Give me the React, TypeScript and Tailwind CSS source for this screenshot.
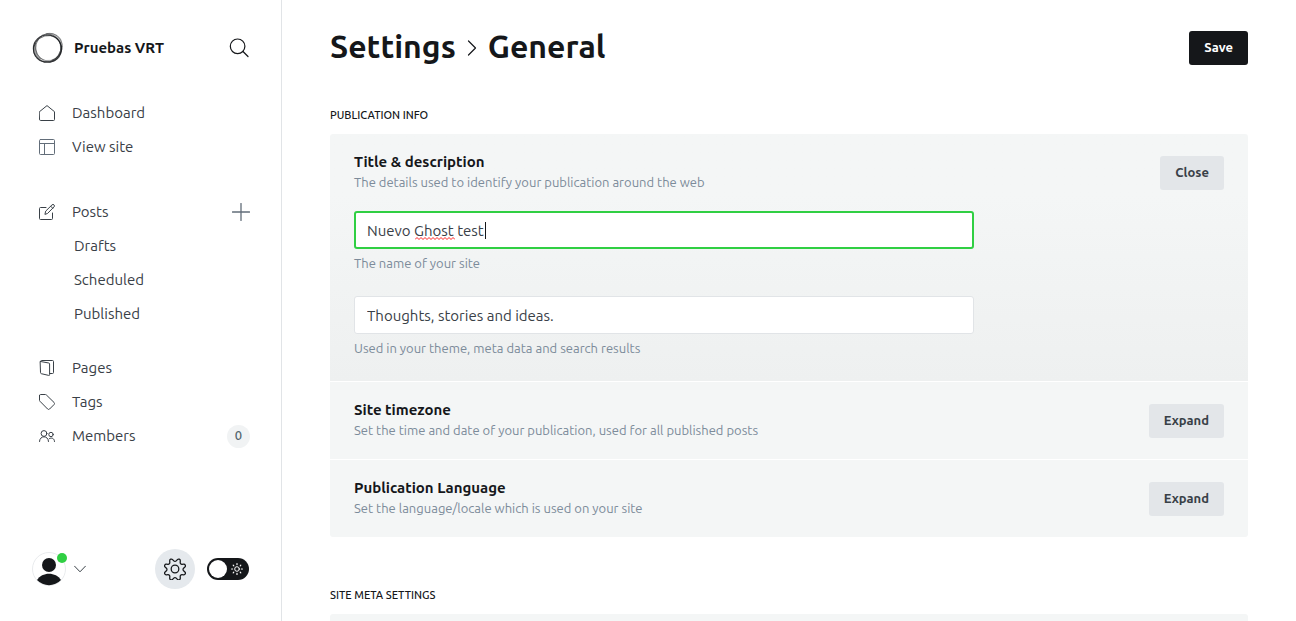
import { useState, type ReactNode } from "react";

type IconProps = { className?: string };

function Logo() {
  return (
    <svg viewBox="0 0 32 32" className="size-8 shrink-0" fill="none" stroke="#15171a" aria-hidden="true">
      <ellipse cx="15.4" cy="16.6" rx="14" ry="13.6" strokeWidth="1.2" strokeOpacity=".8" />
      <ellipse cx="17" cy="15" rx="13" ry="14" strokeWidth=".7" strokeOpacity=".5" transform="rotate(35 17 15)" />
      <ellipse cx="15.2" cy="16.800" rx="14.200" ry="12.800" strokeWidth=".9" strokeOpacity=".6" transform="rotate(-35 15.2 16.8)" />
      <ellipse cx="16.600" cy="16" rx="12.800" ry="14.400" strokeWidth=".7" strokeOpacity=".5" transform="rotate(-25 16.6 16)" />
      <path d="M14 2.600c8-2.400 15.400 3.400 15.200 11.800" strokeWidth="2.600" strokeOpacity=".3" />
      <path d="M29.600 14c0 7-3.600 13-9.500 15" strokeWidth="2" strokeOpacity=".4" />
      <path d="M3 10.500c-1.800 6 .4 13.500 5.600 17" strokeWidth="2" strokeOpacity=".4" />
    </svg>
  );
}

function Line({ className = "size-4", children, box = 16 }: IconProps & { children: ReactNode; box?: number }) {
  return (
    <svg
      viewBox={`0 0 ${box} ${box}`}
      className={`${className} shrink-0`}
      fill="none"
      stroke="currentColor"
      strokeLinecap="round"
      strokeLinejoin="round"
      aria-hidden="true"
    >
      {children}
    </svg>
  );
}

const icons = {
  home: (
    <Line>
      <path d="M.5 6.700 8 .6l7.500 6.100V14.500a1 1 0 0 1-1 1h-13a1 1 0 0 1-1-1z" />
    </Line>
  ),
  site: (
    <Line className="size-4 text-[#626d79]">
      <rect x=".5" y=".5" width="15" height="15" rx="1" />
      <path d="M.5 4.500h15M5.500 4.500v11" />
    </Line>
  ),
  edit: (
    <Line>
      <path d="M13.500 9v5.500a1 1 0 0 1-1 1h-11a1 1 0 0 1-1-1v-10a1 1 0 0 1 1-1H7" />
      <path d="m6 10 .7-2.900L13 .9a1.350 1.350 0 0 1 2 2L8.800 9.200zM11.700 2.200l2 2" />
    </Line>
  ),
  pages: (
    <Line>
      <path d="M1.500 1.500 9.800 3a1 1 0 0 1 .8 1v10.700a.7.7 0 0 1-.9.700l-7.400-1.700a1 1 0 0 1-.8-1z" />
      <path d="M1.500 1.500a1 1 0 0 1 1-1h11a1 1 0 0 1 1 1v11a1 1 0 0 1-1 1h-2.700" />
    </Line>
  ),
  tag: (
    <Line>
      <path d="M.5 1.500v4.700a1.400 1.400 0 0 0 .4 1L8.600 15a1.400 1.400 0 0 0 2 0l4.500-4.500a1.400 1.400 0 0 0 0-2L7.300.9a1.400 1.400 0 0 0-1-.4H1.500a1 1 0 0 0-1 1z" />
    </Line>
  ),
  members: (
    <Line>
      <circle cx="5" cy="5.500" r="2.900" />
      <circle cx="12" cy="6.500" r="2.200" />
      <path d="M.5 13.500c0-6.400 9-6.400 9 0M10.200 10.700c2.300-1.600 5.300-.4 5.300 2.800" />
    </Line>
  ),
};

function Gear() {
  return (
    <Line box={26} className="size-[22px]">
      <g strokeWidth="1.500" transform="translate(1 1)">
        <circle cx="12" cy="12" r="4.500" />
        <path d="m10.546 2.438a1.957 1.957 0 0 0 2.908 0l1.400-1.540a1.959 1.959 0 0 1 3.400 1.407l-.1 2.076a1.959 1.959 0 0 0 2.057 2.056l2.077-.1a1.958 1.958 0 0 1 1.400 3.400l-1.540 1.400a1.961 1.961 0 0 0 0 2.909l1.540 1.400a1.959 1.959 0 0 1-1.400 3.400l-2.077-.1a1.957 1.957 0 0 0-2.057 2.056l.1 2.077a1.959 1.959 0 0 1-3.400 1.400l-1.400-1.540a1.958 1.958 0 0 0-2.908 0l-1.400 1.540a1.959 1.959 0 0 1-3.400-1.400l.1-2.077a1.957 1.957 0 0 0-2.057-2.056l-2.077.1a1.959 1.959 0 0 1-1.400-3.400l1.540-1.400a1.961 1.961 0 0 0 0-2.909l-1.540-1.400a1.958 1.958 0 0 1 1.400-3.400l2.077.1a1.959 1.959 0 0 0 2.057-2.056l-.1-2.076a1.959 1.959 0 0 1 3.400-1.407z" />
      </g>
    </Line>
  );
}

function Sun() {
  return (
    <Line box={12} className="size-3">
      <circle cx="6" cy="6" r="2.300" />
      <path d="M6 .6v1M6 10.400v1M.6 6h1M10.400 6h1M2.200 2.200l.6.6M9.200 9.200l.6.6M2.200 9.800l.6-.6M9.200 2.800l.6-.6" strokeWidth="1.200" />
    </Line>
  );
}

function NavItem({ icon, label, children }: { icon: ReactNode; label: string; children?: ReactNode }) {
  return (
    <li className="flex h-[34px] items-center justify-between pr-[31px] pl-[39px]">
      <a href="#" className="flex items-center gap-[17px]">
        {icon}
        {label}
      </a>
      {children}
    </li>
  );
}

function SubItem({ label }: { label: string }) {
  return (
    <li className="flex h-[34px] items-center pl-[74px]">
      <a href="#">{label}</a>
    </li>
  );
}

function Sidebar() {
  const [dark, setDark] = useState(false);
  return (
    <aside className="flex w-[282px] shrink-0 flex-col border-r border-[#e1e4e7] text-[#394047]">
      <header className="flex h-24 items-center justify-between pr-8 pl-8 text-[#15171a]">
        <div className="flex items-center gap-[10px]">
          <Logo />
          <span className="text-[15px] font-bold">Pruebas VRT</span>
        </div>
        <button type="button" aria-label="Search">
          <Line box={20} className="size-5">
            <g strokeWidth="1.200">
              <circle cx="8.600" cy="8.300" r="7.300" />
              <path d="m14 13.500 5 5" />
            </g>
          </Line>
        </button>
      </header>
      <nav className="flex flex-col text-[15px]">
        <ul>
          <NavItem icon={icons.home} label="Dashboard" />
          <NavItem icon={icons.site} label="View site" />
        </ul>
        <ul className="mt-[31px]">
          <NavItem icon={icons.edit} label="Posts">
            <button type="button" aria-label="New post" className="text-[#626d79]">
              <Line box={18} className="size-[18px]">
                <path d="M9 .5v17M.5 9h17" strokeWidth="1.300" />
              </Line>
            </button>
          </NavItem>
          <SubItem label="Drafts" />
          <SubItem label="Scheduled" />
          <SubItem label="Published" />
        </ul>
        <ul className="mt-5">
          <NavItem icon={icons.pages} label="Pages" />
          <NavItem icon={icons.tag} label="Tags" />
          <NavItem icon={icons.members} label="Members">
            <span className="flex size-[23px] items-center justify-center rounded-full bg-[#f1f3f4] text-[13px] font-medium text-[#54666d]">
              0
            </span>
          </NavItem>
        </ul>
      </nav>
      <footer className="mt-auto flex items-center justify-between pr-8 pb-8 pl-8">
        <button type="button" aria-label="Account" className="relative flex items-center gap-2">
          <svg viewBox="0 0 34 34" className="size-[34px]" aria-hidden="true">
            <circle cx="17" cy="17" r="16.500" fill="#fff" stroke="#e9ebed" />
            <circle cx="17" cy="13" r="7" fill="#15171a" />
            <path d="M5 28c5-8.500 19-8.500 24 0a16.500 16.500 0 0 1-24 0z" fill="#15171a" />
          </svg>
          <span className="absolute top-px left-[25px] size-[10px] rounded-full bg-[#30cf43]" />
          <Line box={12} className="size-3">
            <path d="m.6 3.200 5.400 5.600 5.400-5.600" />
          </Line>
        </button>
        <div className="flex items-center gap-3">
          <a
            href="#"
            aria-label="Settings"
            className="flex size-10 items-center justify-center rounded-full bg-[#e5e9ed] text-[#15171a]"
          >
            <Gear />
          </a>
          <button
            type="button"
            role="switch"
            aria-checked={dark}
            aria-label="Dark mode"
            onClick={() => setDark(!dark)}
            className="flex h-[22px] w-[42px] items-center justify-between rounded-full bg-[#15171a] pr-[6px] pl-[2px] text-white"
          >
            <span className="size-[18px] rounded-full bg-white" />
            <Sun />
          </button>
        </div>
      </footer>
    </aside>
  );
}

function SettingRow({
  title,
  text,
  action,
  open = false,
  children,
}: {
  title: string;
  text: string;
  action: string;
  open?: boolean;
  children?: ReactNode;
}) {
  return (
    <section
      className={
        open ? "bg-linear-to-b from-[#f4f6f6] from-25% to-[#eef0f0] px-6 pt-[18px] pb-[22px]" : "bg-[#f4f6f6] px-6 py-[18px]"
      }
    >
      <div className="flex items-start justify-between">
        <div>
          <h3 className="text-[15px] leading-5 font-bold text-[#15171a]">{title}</h3>
          <p className="text-[13px] leading-[21px] text-[#7c8b9a]">{text}</p>
        </div>
        <button type="button" className="mt-1 h-[34px] rounded-[3px] bg-[#e3e6e9] px-[15px] text-[13px] font-semibold text-[#394047]">
          {action}
        </button>
      </div>
      {children}
    </section>
  );
}

const field = "block h-[38px] w-full rounded-[3px] bg-white text-[15px] text-[#394047] outline-none";

export default function App() {
  const [title, setTitle] = useState("Nuevo Ghost test");
  const [description, setDescription] = useState("Thoughts, stories and ideas.");

  return (
    <div className="flex h-screen bg-white font-['Ubuntu','Noto_Sans',sans-serif]">
      <Sidebar />
      <main className="min-w-0 flex-1 overflow-y-auto px-12 [scrollbar-width:none]">
        <header className="flex h-24 items-center justify-between">
          <h1 className="flex items-center pb-1 text-[32px] leading-10 font-bold text-[#15171a]">
            <a href="#">Settings</a>
            <Line box={16} className="mx-2 mt-1 size-4">
              <path d="m4.500 1 7 7-7 7" strokeWidth="1.200" />
            </Line>
            General
          </h1>
          <button type="button" className="h-[34px] rounded-[3px] bg-[#15171a] px-[15px] text-[13px] font-semibold text-white">
            Save
          </button>
        </header>

        <h2 className="mt-[10px] mb-[10px] text-[11px] leading-[18px] font-medium text-[#15171a]">PUBLICATION INFO</h2>
        <div className="flex flex-col gap-px overflow-hidden rounded-[3px]">
          <SettingRow open title="Title & description" text="The details used to identify your publication around the web" action="Close">
            <div className="mt-[18px] flex max-w-[620px] flex-col gap-[22px]">
              <div>
                <div className="relative">
                  <input
                    id="site-title"
                    className={`${field} border-2 border-[#30cf43] px-[11px] caret-transparent`}
                    value={title}
                    spellCheck={false}
                    onChange={(e) => setTitle(e.target.value)}
                  />
                  <svg viewBox="0 0 40 3" className="absolute top-[26px] left-[61px] h-[3px] w-10" aria-hidden="true">
                    <path
                      d="M0 2.500 2 .5l2 2 2-2 2 2 2-2 2 2 2-2 2 2 2-2 2 2 2-2 2 2 2-2 2 2 2-2 2 2 2-2 2 2 2-2 2 2"
                      fill="none"
                      stroke="#f22"
                    />
                  </svg>
                  <span className="absolute top-[11px] left-[131px] h-[17px] w-px bg-[#15171a]" />
                </div>
                <label htmlFor="site-title" className="mt-1 block text-[13px] leading-[21px] text-[#7c8b9a]">
                  The name of your site
                </label>
              </div>
              <div>
                <input
                  id="site-description"
                  className={`${field} border border-[#e1e4e7] px-3`}
                  value={description}
                  onChange={(e) => setDescription(e.target.value)}
                />
                <label htmlFor="site-description" className="mt-1 block text-[13px] leading-[21px] text-[#7c8b9a]">
                  Used in your theme, meta data and search results
                </label>
              </div>
            </div>
          </SettingRow>
          <SettingRow title="Site timezone" text="Set the time and date of your publication, used for all published posts" action="Expand" />
          <SettingRow title="Publication Language" text="Set the language/locale which is used on your site" action="Expand" />
        </div>

        <h2 className="mt-[49px] mb-[10px] text-[11px] leading-[18px] font-medium text-[#15171a]">SITE META SETTINGS</h2>
        <div className="h-20 rounded-[3px] bg-[#f4f6f6]" />
      </main>
    </div>
  );
}
